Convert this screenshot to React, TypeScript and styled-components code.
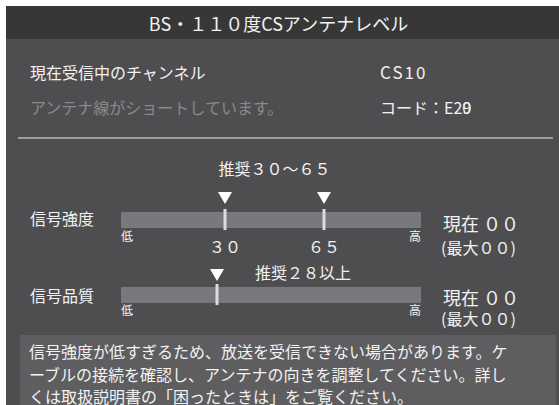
import React from "react";
import styled, { createGlobalStyle } from "styled-components";

const GlobalStyle = createGlobalStyle`
  html, body { margin: 0; padding: 0; background: #ffffff; }
  body { font-family: "Noto Sans CJK JP", "Noto Sans", sans-serif; }
`;

const Screen = styled.div`
  width: 559px;
  height: 405px;
  box-sizing: border-box;
  padding: 6px 0 0 6px;
  background: #ffffff;
  overflow: hidden;
  display: flex;
  flex-direction: column;
`;

const TitleBar = styled.div`
  height: 33px;
  flex: none;
  background: #373737;
  color: #f2f2f2;
  font-size: 18px;
  display: flex;
  align-items: center;
  justify-content: center;
  padding-right: 8px;
`;

const Body = styled.div`
  flex: 1;
  min-height: 0;
  background: #4e4e50;
  padding: 21px 0 0 24px;
  display: flex;
  flex-direction: column;
  color: #f2f2f2;
`;

const InfoGrid = styled.div`
  display: grid;
  grid-template-columns: 350px auto;
  row-gap: 11px;
  font-size: 16px;
  line-height: 24px;
`;

const InfoText = styled.div<{ $dim?: boolean; $wide?: boolean }>`
  color: ${(p) => (p.$dim ? "#8a8a8c" : "#f2f2f2")};
  white-space: nowrap;
  font-size: ${(p) => (p.$wide ? "17px" : "16px")};
  letter-spacing: ${(p) => (p.$wide ? "2px" : "0")};
`;

const Overlap = styled.span`
  margin-left: -0.55em;
`;

const Divider = styled.div`
  height: 2px;
  flex: none;
  background: #9d9d9f;
  margin: 18px 6px 0 -12px;
`;

const MeterRow = styled.div<{ $mt: number; $h: number }>`
  display: grid;
  flex: none;
  grid-template-columns: 91px 300px auto;
  height: ${(p) => p.$h}px;
  margin-top: ${(p) => p.$mt}px;
`;

const MeterLabel = styled.div<{ $pt: number }>`
  padding-top: ${(p) => p.$pt}px;
  font-size: 16px;
  line-height: 24px;
  white-space: nowrap;
`;

const Track = styled.div`
  display: flex;
  flex-direction: column;
`;

const Zone = styled.div<{ $h: number }>`
  position: relative;
  height: ${(p) => p.$h}px;
`;

const RecText = styled.div<{ $top: number }>`
  position: absolute;
  top: ${(p) => p.$top}px;
  font-size: 16px;
  line-height: 24px;
  white-space: nowrap;
`;

const Triangle = styled.div<{ $top: number }>`
  position: absolute;
  top: ${(p) => p.$top}px;
  width: 0;
  height: 0;
  border-left: 7.5px solid transparent;
  border-right: 7.5px solid transparent;
  border-top: 12px solid #ffffff;
  transform: translateX(-50%);
`;

const Bar = styled.div`
  position: relative;
  height: 16px;
  background: #78797c;
`;

const Tick = styled.div`
  position: absolute;
  top: -3px;
  bottom: -2px;
  width: 3px;
  background: #dcdcdc;
  transform: translateX(-50%);
`;

const ScaleZone = styled.div<{ $h: number; $pt: number }>`
  position: relative;
  height: ${(p) => p.$h}px;
  box-sizing: border-box;
  padding-top: ${(p) => p.$pt}px;
  display: flex;
  justify-content: space-between;
  align-items: flex-start;
  font-size: 12px;
  line-height: 14px;
`;

const ScaleNum = styled.div`
  position: absolute;
  top: 9px;
  font-size: 16px;
  line-height: 18px;
  white-space: nowrap;
  transform: translateX(-50%);
`;

const Readout = styled.div<{ $pt: number }>`
  padding-top: ${(p) => p.$pt}px;
  padding-left: 20px;
  display: flex;
  flex-direction: column;
  white-space: nowrap;
`;

const Current = styled.div`
  font-size: 18px;
  line-height: 22px;
  padding-left: 2px;
`;

const Max = styled.div<{ $mt: number }>`
  font-size: 16px;
  line-height: 20px;
  margin-top: ${(p) => p.$mt}px;
`;

const MessageBox = styled.div`
  flex: 1;
  margin: 12px 3px 0 -10px;
  padding: 5px 0 0 9px;
  background: #5e5e60;
  font-size: 16px;
  line-height: 22.5px;
`;

const Line = styled.div`
  white-space: nowrap;
`;

const pct = (v: number) => `${v}%`;

export default function App() {
  const m1 = [34.7, 67.7];
  const m2 = 32;
  return (
    <>
      <GlobalStyle />
      <Screen>
        <TitleBar>BS・１１０度CSアンテナレベル</TitleBar>
        <Body>
          <InfoGrid>
            <InfoText>現在受信中のチャンネル</InfoText>
            <InfoText $wide>CS10</InfoText>
            <InfoText $dim>アンテナ線がショートしています。</InfoText>
            <InfoText>
              コード：E20<Overlap>9</Overlap>
            </InfoText>
          </InfoGrid>
          <Divider />

          <MeterRow $mt={17} $h={99}>
            <MeterLabel $pt={50}>信号強度</MeterLabel>
            <Track>
              <Zone $h={56}>
                <RecText
                  $top={0}
                  style={{ left: pct((m1[0] + m1[1]) / 2), transform: "translateX(-50%)" }}
                >
                  推奨３０～６５
                </RecText>
                {m1.map((v) => (
                  <Triangle key={v} $top={36} style={{ left: pct(v) }} />
                ))}
              </Zone>
              <Bar>
                {m1.map((v) => (
                  <Tick key={v} style={{ left: pct(v) }} />
                ))}
              </Bar>
              <ScaleZone $h={27} $pt={1}>
                <span>低</span>
                <span>高</span>
                <ScaleNum style={{ left: pct(m1[0]) }}>３０</ScaleNum>
                <ScaleNum style={{ left: pct(m1[1]) }}>６５</ScaleNum>
              </ScaleZone>
            </Track>
            <Readout $pt={56}>
              <Current>現在 ００</Current>
              <Max $mt={3}>(最大００)</Max>
            </Readout>
          </MeterRow>

          <MeterRow $mt={6} $h={62}>
            <MeterLabel $pt={22}>信号品質</MeterLabel>
            <Track>
              <Zone $h={26}>
                <Triangle $top={8} style={{ left: pct(m2) }} />
                <RecText $top={-1} style={{ left: `calc(${pct(m2)} + 38px)` }}>
                  推奨２８以上
                </RecText>
              </Zone>
              <Bar>
                <Tick style={{ left: pct(m2) }} />
              </Bar>
              <ScaleZone $h={20} $pt={0}>
                <span>低</span>
                <span>高</span>
              </ScaleZone>
            </Track>
            <Readout $pt={25}>
              <Current>現在 ００</Current>
              <Max $mt={0}>(最大００)</Max>
            </Readout>
          </MeterRow>

          <MessageBox>
            <Line>信号強度が低すぎるため、放送を受信できない場合があります。ケ</Line>
            <Line>ーブルの接続を確認し、アンテナの向きを調整してください。詳し</Line>
            <Line>くは取扱説明書の「困ったときは」をご覧ください。</Line>
          </MessageBox>
        </Body>
      </Screen>
    </>
  );
}
